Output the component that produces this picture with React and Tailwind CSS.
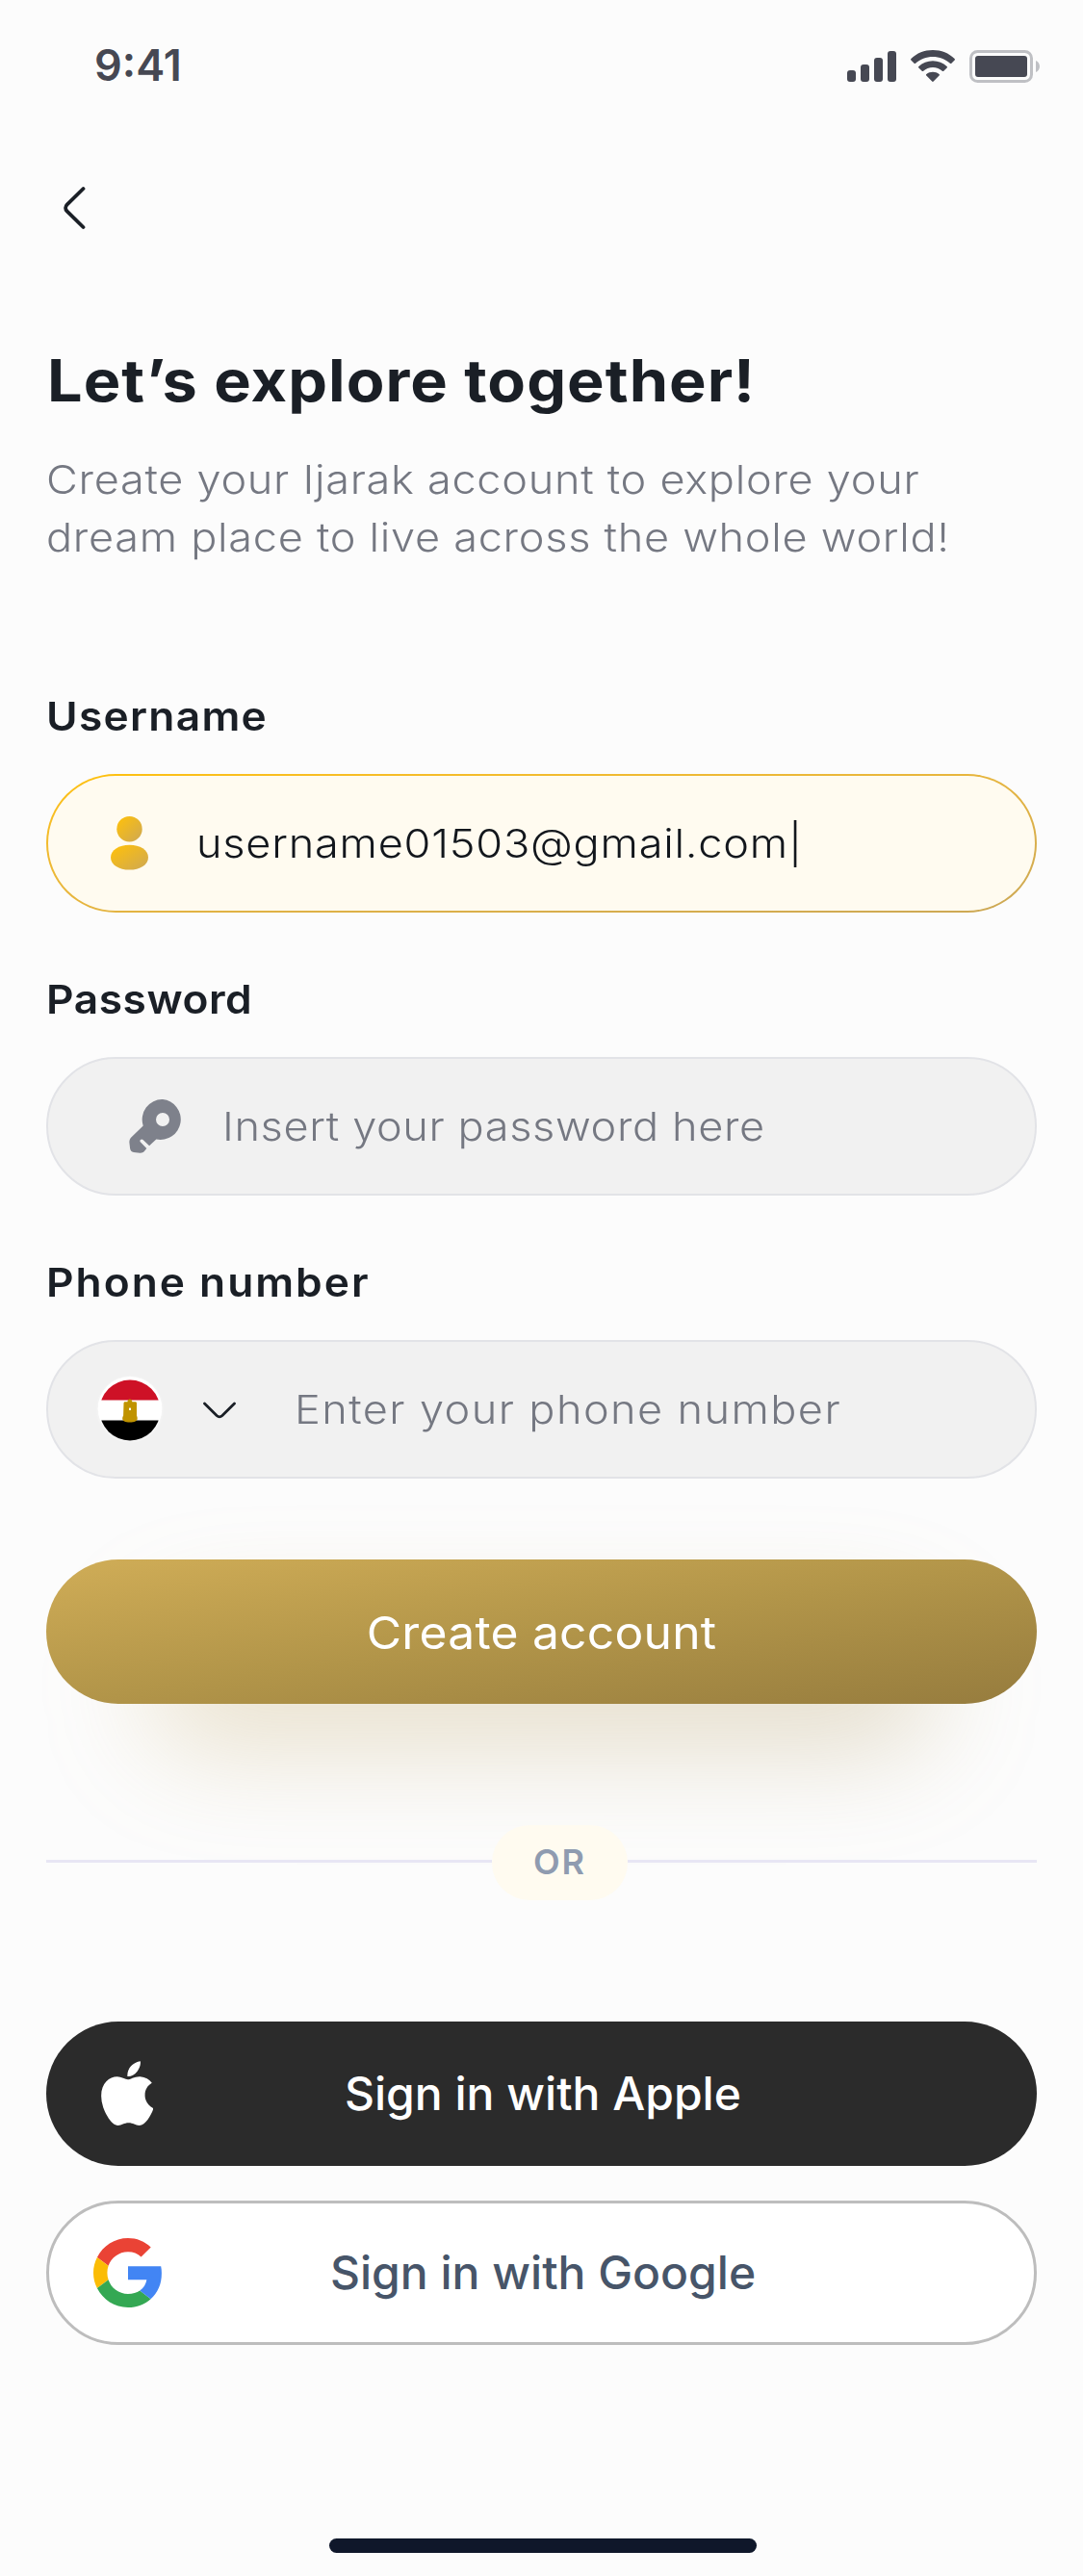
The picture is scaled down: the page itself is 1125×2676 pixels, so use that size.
import React from "react";
import { FaApple } from "react-icons/fa";

function StatusBar() {
  return (
    <header className="flex h-[138px] items-start justify-between pl-[98px] pr-[44px] text-[#464853]">
      <span className="mt-[38px] text-[45px] font-semibold leading-[60px]">9:41</span>
      <div className="mt-[52px] flex items-start">
        <svg width="51" height="33" viewBox="0 0 51 33" fill="currentColor" className="mt-px">
          <rect x="0" y="20" width="9" height="12" rx="3" />
          <rect x="14" y="14" width="9" height="18" rx="3" />
          <rect x="28" y="7" width="9" height="25" rx="3" />
          <rect x="42" y="0" width="9" height="32" rx="3" />
        </svg>
        <svg width="46" height="34" viewBox="0 0 46 34" fill="currentColor" className="ml-[15px]">
          <path d="M23 0C14.300 0 6.200 3.300 .4 8.900c-.5.500-.5 1.100 0 1.600l3.200 3.300c.4.400 1 .4 1.500 0C9.900 9.300 16.200 6.900 23 6.900s13.100 2.400 17.900 6.900c.5.400 1.100.4 1.500 0l3.200-3.300c.5-.5.5-1.100 0-1.600C39.800 3.300 31.700 0 23 0z" />
          <path d="M23 11.200c-5.600 0-10.700 2.100-14.600 5.700-.5.400-.5 1.100 0 1.600l3.300 3.300c.4.400 1 .4 1.500 0 2.600-2.300 6-3.700 9.800-3.700s7.200 1.400 9.800 3.700c.5.400 1.100.4 1.500 0l3.300-3.300c.5-.5.500-1.200 0-1.600-3.900-3.600-9-5.700-14.600-5.700z" />
          <path d="M23 22.800c-2.500 0-4.800.8-6.600 2.200-.5.400-.6 1.100-.1 1.500l5.900 6.100c.4.400 1.100.4 1.500 0l5.900-6.100c.5-.4.400-1.100-.1-1.500-1.800-1.400-4.100-2.200-6.500-2.200z" />
        </svg>
        <svg width="74" height="34" viewBox="0 0 74 34" className="ml-[15px]">
          <rect x="1.500" y="1.500" width="63" height="31" rx="7" fill="none" stroke="#bfc0c4" strokeWidth="3" />
          <rect x="6" y="6" width="54" height="22" rx="3" fill="#464853" />
          <path d="M69 11c5.300 2 5.300 10 0 12z" fill="#bfc0c4" />
        </svg>
      </div>
    </header>
  );
}

function UserIcon() {
  return (
    <svg width="39" height="56" viewBox="0 0 39 56">
      <defs>
        <linearGradient id="gold" x1="0" y1="0" x2="1" y2="1">
          <stop offset="0.1" stopColor="#fcbf0f" />
          <stop offset="1" stopColor="#cea854" />
        </linearGradient>
      </defs>
      <circle cx="19.500" cy="13.200" r="13.200" fill="url(#gold)" />
      <path d="M19.500 29.700c11 0 19.500 5.300 19.500 13S30.500 55.600 19.500 55.600 0 50.300 0 42.700s8.500-13 19.500-13z" fill="url(#gold)" />
    </svg>
  );
}

function KeyIcon() {
  return (
    <svg width="56" height="56" viewBox="0 0 56 56">
      <path
        fill="#7e818b"
        fillRule="evenodd"
        d="M35 0a21 21 0 0 0-20.300 27.500L2.300 39.600C.9 41 .2 43 .4 44.900l.7 6.200c.3 2.200 1.600 3.600 3.800 3.900l6.300.7c1.900.2 3.500-.4 4.700-1.700l2.400-3.100-6.300-6.400c-.8-.8-.8-1.700 0-2.500s1.700-.8 2.500 0l6.600 6.200 7.200-6.800A21 21 0 1 0 35 0zm0 14a7 7 0 1 1 0 14 7 7 0 0 1 0-14z"
      />
    </svg>
  );
}

function EgyptFlag() {
  return (
    <svg width="70" height="70" viewBox="0 0 70 70">
      <defs>
        <clipPath id="flag-disc">
          <circle cx="35" cy="36" r="31.500" />
        </clipPath>
      </defs>
      <circle cx="35" cy="34.800" r="34.800" fill="#f4f4f4" />
      <circle cx="35" cy="34.300" r="33.300" fill="#fff" />
      <g clipPath="url(#flag-disc)">
        <rect x="0" y="0" width="70" height="25.500" fill="#ce1126" />
        <rect x="0" y="46.500" width="70" height="24" fill="#000" />
      </g>
      <path
        d="M34.800 24.400c1.600 0 2.500 1 2.500 2.900h3.300c.9 0 1.400.6 1.400 1.500v13c.6.800.7 1.700.7 2.800 0 2.800-3 4-7.900 4s-7.600-1.200-7.600-4c0-1.100.2-2 .9-2.800l.4-13c0-.9.500-1.500 1.400-1.500h2.600c0-1.900.8-2.900 2.300-2.900z"
        fill="#c09300"
      />
      <rect x="34" y="33.500" width="2" height="2.500" rx=".6" fill="#fff" />
    </svg>
  );
}

function GoogleIcon() {
  return (
    <svg width="71" height="72" viewBox="0 0 71 72">
      <path fill="#EA4335" d="M36 0c9 0 17.300 3.300 23.700 9.500L49.600 19.500C46 16 41.400 14.200 36 14.200c-9.600 0-17.600 6.200-20.400 14.600L3.900 19.900C9.900 8.100 21.900 0 36 0z" />
      <path fill="#FBBC05" d="M0 36c0-5.800 1.400-11.300 3.900-16.100l11.700 8.900c-.8 2.300-1.200 4.700-1.200 7.200s.4 5 1.200 7.200L3.900 52.100C1.400 47.300 0 41.800 0 36z" />
      <path fill="#34A853" d="M15.600 43.200C18.400 51.700 26.400 57.900 36 57.900c4.900 0 9.100-1.300 12.300-3.500l11.300 8.800C53.500 68.900 45.200 72 36 72 21.900 72 9.900 63.900 3.900 52.100l11.700-8.900z" />
      <path fill="#4285F4" d="M36 29.300h34.200c.5 2.300.7 4.700.7 7.200 0 11.500-4.200 20.600-11.300 26.700l-11.300-8.800c3.800-2.500 6.300-6.400 7.100-11.100H36v-14z" />
    </svg>
  );
}

function Field({ label, labelClass, active, children }) {
  return (
    <div className="flex flex-col gap-[30px]">
      <label className={`origin-left scale-x-108 text-[41px] font-semibold leading-[60px] text-[#1a1f26] ${labelClass}`}>{label}</label>
      {active ? (
        <div className="h-36 rounded-full bg-linear-to-br from-[#ffc107] to-[#cca855] p-0.5">
          <div className="flex h-full items-center rounded-full bg-[#fffbf0]">{children}</div>
        </div>
      ) : (
        <div className="flex h-36 items-center rounded-full border-2 border-[#e2e3e7] bg-[#f1f1f1]">{children}</div>
      )}
    </div>
  );
}

export default function App() {
  return (
    <div className="flex h-[2676px] w-[1125px] flex-col overflow-hidden bg-[#fcfcfc] font-['Inter',sans-serif]">
      <StatusBar />

      <main className="flex flex-col px-12">
        <button className="ml-[17px] mt-[55px] flex h-[46px] w-6" aria-label="Back">
          <svg width="24" height="46" viewBox="0 0 24 46" fill="none" stroke="#1a1f26" strokeWidth="3.800" strokeLinecap="round">
            <path d="M21.500 3L4.600 19.600c-2 2-2 4.800 0 6.800L21.500 43" />
          </svg>
        </button>

        <h1 className="mt-[120px] origin-left scale-x-108 pl-px text-[60px] font-bold leading-[72px] tracking-[0.95px] text-[#1a1f26]">
          Let’s explore together!
        </h1>
        <p className="mt-[37px] origin-left scale-x-110 whitespace-nowrap text-[41px] font-light leading-[60px] tracking-[0.64px] text-[#757882]">
          Create your Ijarak account to explore your
          <br />
          dream place to live across the whole world!
        </p>

        <form className="mt-[126px] flex flex-col gap-[60px]">
          <Field label="Username" labelClass="tracking-[1.2px]" active>
            <span className="ml-[65px] flex">
              <UserIcon />
            </span>
            <span className="ml-[50px] origin-left scale-x-110 pt-px text-[41px] font-light tracking-[0.7px] text-[#12161c]">
              username01503@gmail.com|
            </span>
          </Field>
          <Field label="Password" labelClass="tracking-[0.5px]">
            <span className="ml-[84px] flex">
              <KeyIcon />
            </span>
            <span className="ml-[41px] origin-left scale-x-110 pt-px text-[41px] font-light tracking-[0.56px] text-[#757882]">
              Insert your password here
            </span>
          </Field>
          <Field label="Phone number" labelClass="tracking-[1.85px]">
            <span className="ml-[50px] flex">
              <EgyptFlag />
            </span>
            <svg width="36" height="20" viewBox="0 0 36 20" className="ml-10 mt-0.5" fill="none" stroke="#1a1f26" strokeWidth="2.800" strokeLinecap="round">
              <path d="M2.500 3l12.600 12.500c1.900 1.800 3.900 1.800 5.800 0L33.500 3" />
            </svg>
            <span className="ml-[60px] origin-left scale-x-110 pt-px text-[41px] font-light tracking-[1.28px] text-[#757882]">
              Enter your phone number
            </span>
          </Field>
        </form>

        <div className="relative mt-[84px]">
          <div className="absolute left-[102px] right-[102px] top-[60px] h-[140px] rounded-full bg-linear-to-br from-[#cca955]/25 to-[#967c3c]/25 blur-[54px]" />
          <button className="relative flex h-[150px] w-full items-center justify-center rounded-full bg-linear-to-br from-[#d0ad57] via-[#b29549] to-[#967c3e] pt-0.5 text-[47px] font-normal tracking-[0.2px] text-white">
            <span className="scale-x-106">Create account</span>
          </button>
        </div>

        <div className="relative mt-[126px] flex h-[78px] items-center">
          <div className="-mt-[3px] h-[3px] w-[463px] bg-[#e8e6f4]" />
          <div className="flex h-[78px] w-[141px] items-center justify-center rounded-[41px] bg-[#fffbf0] pb-0.5 text-4xl font-semibold tracking-[2px] text-[#8f9bb0]">
            OR
          </div>
          <div className="-mt-[3px] h-[3px] flex-1 bg-[#e8e6f4]" />
        </div>

        <div className="mt-[126px] flex flex-col gap-9">
          <button className="flex h-[150px] items-center rounded-full bg-[#2b2b2b] text-5xl font-medium text-white">
            <span className="ml-[57px] flex w-[54px] justify-center">
              <FaApple className="-mt-px h-[67px] w-[54px]" preserveAspectRatio="none" viewBox="3 31 374 449" />
            </span>
            <span className="ml-[199px]">Sign in with Apple</span>
          </button>
          <button className="flex h-[150px] items-center rounded-full border-[3px] border-[#bdbdbd] bg-white text-5xl font-medium text-[#475569]">
            <span className="ml-[46px] flex">
              <GoogleIcon />
            </span>
            <span className="ml-[175px]">Sign in with Google</span>
          </button>
        </div>
      </main>

      <div className="mb-6 ml-[342px] mt-auto h-[15px] w-[444px] rounded-full bg-[#0f172a]" />
    </div>
  );
}
